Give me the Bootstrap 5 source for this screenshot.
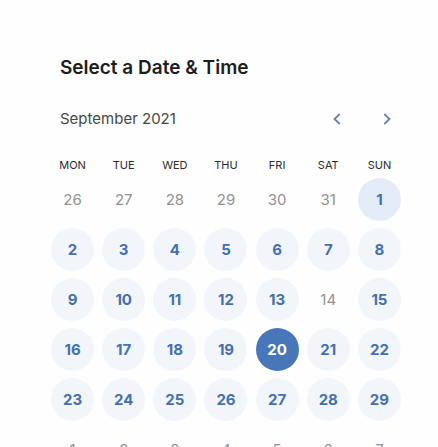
<!DOCTYPE html>
<html lang="en">
<head>
<meta charset="utf-8">
<meta name="viewport" content="width=device-width, initial-scale=1">
<title>Select a Date &amp; Time</title>
<link href="https://cdn.jsdelivr.net/npm/bootstrap@5.3.0/dist/css/bootstrap.min.css" rel="stylesheet">
<style>
  body { font-family: Inter, "Open Sans", sans-serif; background: #fefefe; color: #1d1d1d; }
  .scheduler { padding: 56px 33px 0 47px; }
  .scheduler-title { font-size: 19px; line-height: 24px; padding-left: 13px; margin-bottom: 27px; font-weight: 600; }
  .month-bar { padding-left: 13px; margin-bottom: 25px; height: 24px; }
  .month-name { font-size: 15px; font-weight: 400; line-height: 24px; color: #484848; }
  .month-nav { gap: 26px; padding-right: 6px; }
  .month-nav button { width: 24px; height: 24px; color: #6484b8; }
  .calendar { table-layout: fixed; }
  .calendar th { font-size: 11px; font-weight: 400; line-height: 18px; color: #2c2c2c; padding: 0; }
  .calendar td { height: 50px; padding: 0; vertical-align: middle; }
  .day { width: 43px; height: 43px; font-size: 15px; line-height: 43px; font-weight: 700; color: #4470b0; background: #f2f6fb; }
  .day:disabled { background: transparent; color: #929292; font-weight: 400; }
  .day.today { background: #e4ecf7; }
  .day.chosen { background: #4777b9; color: #fff; }
</style>
<script src="https://cdn.jsdelivr.net/npm/bootstrap@5.3.0/dist/js/bootstrap.bundle.min.js"></script>
</head>
<body>
<main class="scheduler vh-100 overflow-hidden">
  <h1 class="scheduler-title">Select a Date &amp; Time</h1>
  <div class="month-bar d-flex align-items-center justify-content-between">
    <h2 class="month-name mb-0">September 2021</h2>
    <div class="month-nav d-flex">
      <button type="button" class="btn border-0 p-0 d-flex align-items-center justify-content-center" aria-label="Previous month">
        <svg width="8" height="12" viewBox="0 0 8 12" fill="none" stroke="currentColor" stroke-width="1.8" aria-hidden="true"><path d="M6.7 1 1.5 6l5.2 5"/></svg>
      </button>
      <button type="button" class="btn border-0 p-0 d-flex align-items-center justify-content-center" aria-label="Next month">
        <svg width="8" height="12" viewBox="0 0 8 12" fill="none" stroke="currentColor" stroke-width="1.8" aria-hidden="true"><path d="m1.3 1 5.2 5-5.2 5"/></svg>
      </button>
    </div>
  </div>
  <table class="calendar w-100 text-center" aria-label="September 2021">
    <thead>
      <tr><th scope="col">MON</th><th scope="col">TUE</th><th scope="col">WED</th><th scope="col">THU</th><th scope="col">FRI</th><th scope="col">SAT</th><th scope="col">SUN</th></tr>
    </thead>
    <tbody>
      <tr>
        <td><button type="button" class="day border-0 p-0 rounded-circle" disabled>26</button></td>
        <td><button type="button" class="day border-0 p-0 rounded-circle" disabled>27</button></td>
        <td><button type="button" class="day border-0 p-0 rounded-circle" disabled>28</button></td>
        <td><button type="button" class="day border-0 p-0 rounded-circle" disabled>29</button></td>
        <td><button type="button" class="day border-0 p-0 rounded-circle" disabled>30</button></td>
        <td><button type="button" class="day border-0 p-0 rounded-circle" disabled>31</button></td>
        <td><button type="button" class="day today border-0 p-0 rounded-circle">1</button></td>
      </tr>
      <tr>
        <td><button type="button" class="day border-0 p-0 rounded-circle">2</button></td>
        <td><button type="button" class="day border-0 p-0 rounded-circle">3</button></td>
        <td><button type="button" class="day border-0 p-0 rounded-circle">4</button></td>
        <td><button type="button" class="day border-0 p-0 rounded-circle">5</button></td>
        <td><button type="button" class="day border-0 p-0 rounded-circle">6</button></td>
        <td><button type="button" class="day border-0 p-0 rounded-circle">7</button></td>
        <td><button type="button" class="day border-0 p-0 rounded-circle">8</button></td>
      </tr>
      <tr>
        <td><button type="button" class="day border-0 p-0 rounded-circle">9</button></td>
        <td><button type="button" class="day border-0 p-0 rounded-circle">10</button></td>
        <td><button type="button" class="day border-0 p-0 rounded-circle">11</button></td>
        <td><button type="button" class="day border-0 p-0 rounded-circle">12</button></td>
        <td><button type="button" class="day border-0 p-0 rounded-circle">13</button></td>
        <td><button type="button" class="day border-0 p-0 rounded-circle" disabled>14</button></td>
        <td><button type="button" class="day border-0 p-0 rounded-circle">15</button></td>
      </tr>
      <tr>
        <td><button type="button" class="day border-0 p-0 rounded-circle">16</button></td>
        <td><button type="button" class="day border-0 p-0 rounded-circle">17</button></td>
        <td><button type="button" class="day border-0 p-0 rounded-circle">18</button></td>
        <td><button type="button" class="day border-0 p-0 rounded-circle">19</button></td>
        <td><button type="button" class="day chosen border-0 p-0 rounded-circle" aria-pressed="true">20</button></td>
        <td><button type="button" class="day border-0 p-0 rounded-circle">21</button></td>
        <td><button type="button" class="day border-0 p-0 rounded-circle">22</button></td>
      </tr>
      <tr>
        <td><button type="button" class="day border-0 p-0 rounded-circle">23</button></td>
        <td><button type="button" class="day border-0 p-0 rounded-circle">24</button></td>
        <td><button type="button" class="day border-0 p-0 rounded-circle">25</button></td>
        <td><button type="button" class="day border-0 p-0 rounded-circle">26</button></td>
        <td><button type="button" class="day border-0 p-0 rounded-circle">27</button></td>
        <td><button type="button" class="day border-0 p-0 rounded-circle">28</button></td>
        <td><button type="button" class="day border-0 p-0 rounded-circle">29</button></td>
      </tr>
      <tr>
        <td><button type="button" class="day border-0 p-0 rounded-circle" disabled>1</button></td>
        <td><button type="button" class="day border-0 p-0 rounded-circle" disabled>2</button></td>
        <td><button type="button" class="day border-0 p-0 rounded-circle" disabled>3</button></td>
        <td><button type="button" class="day border-0 p-0 rounded-circle" disabled>4</button></td>
        <td><button type="button" class="day border-0 p-0 rounded-circle" disabled>5</button></td>
        <td><button type="button" class="day border-0 p-0 rounded-circle" disabled>6</button></td>
        <td><button type="button" class="day border-0 p-0 rounded-circle" disabled>7</button></td>
      </tr>
    </tbody>
  </table>
</main>
</body>
</html>
